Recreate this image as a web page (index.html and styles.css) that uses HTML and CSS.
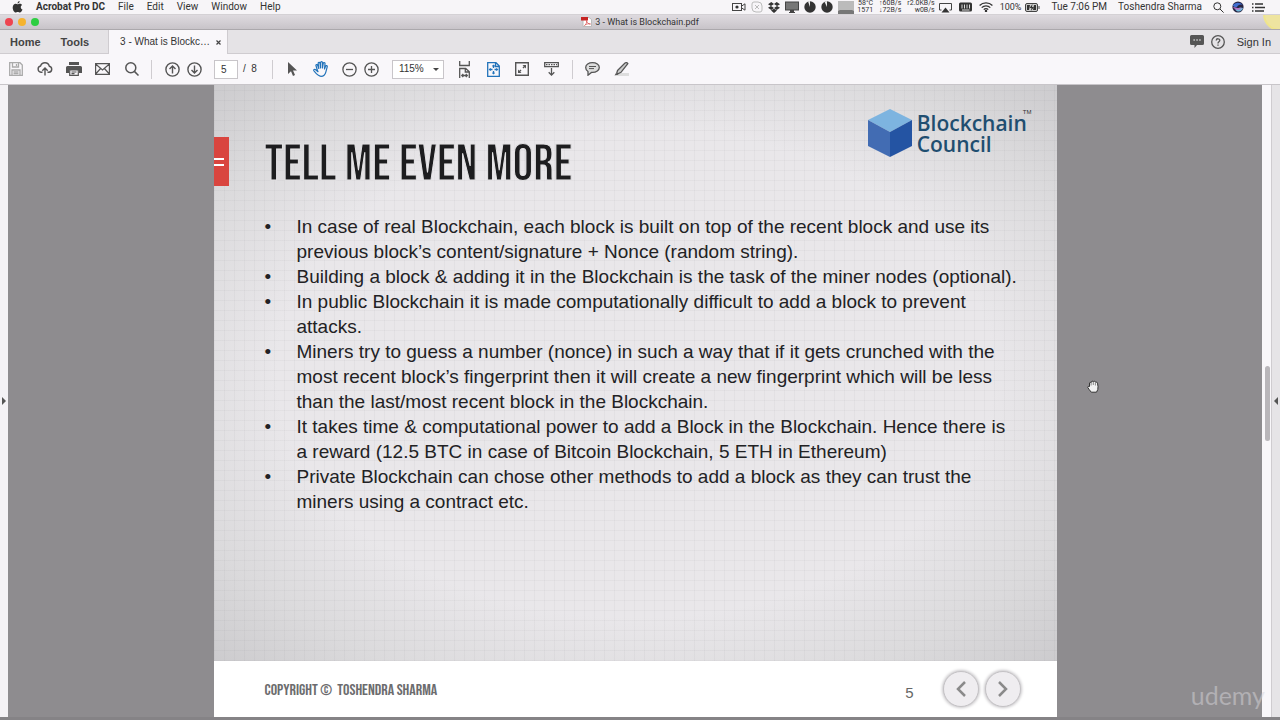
FILE: index.html
```html
<!DOCTYPE html>
<html lang="en">
<head>
<meta charset="utf-8">
<title>3 - What is Blockchain.pdf</title>
<link rel="stylesheet" href="styles.css">
</head>
<body>
<header class="menubar">
  <nav class="menus">
    <svg class="apple" width="11" height="12" viewBox="0 0 11 12"><path d="M7.6 0C7.7 1.4 6.7 2.5 5.5 2.6 5.4 1.4 6.4.2 7.6 0zM5.6 3.2c.6 0 1.2-.5 2.2-.5.9 0 1.8.5 2.3 1.2-2 1.2-1.6 3.8.4 4.6-.5 1.3-1.5 3.1-2.6 3.1-.8 0-1.200-.5-2.200-.5s-1.400.5-2.100.5C2.200 11.600.7 9 .7 6.600.7 4.200 2.200 2.800 3.700 2.800c.8 0 1.400.4 1.900.4z" fill="#333"/></svg>
    <a class="app" href="#">Acrobat Pro DC</a><a href="#">File</a><a href="#">Edit</a><a href="#">View</a><a href="#">Window</a><a href="#">Help</a>
  </nav>
  <div class="status">
    <div class="tray">
      <svg width="14" height="10" viewBox="0 0 14 10" fill="none" stroke="#444"><rect x=".5" y="1.500" width="9" height="7"/><circle cx="5" cy="5" r="1.600" fill="#333" stroke="none"/><path d="M9.500 4.200 13 1.800v6.400L9.500 5.800"/></svg>
      <svg width="12" height="12" viewBox="0 0 12 12" fill="none" stroke="#bbb"><path d="M3 1h4a4 4 0 0 1 4 4v4a2 2 0 0 1-2 2H5a4 4 0 0 1-4-4V3a2 2 0 0 1 2-2zM4 4l4 4M8 4 4 8"/></svg>
      <svg width="12" height="11" viewBox="0 0 12 11" fill="#333"><path d="M3.300 0 6 2 3 4 0 2.200zM8.700 0 12 2.200 9 4 6 2zM0 5.800 3 4l3 2-2.700 2zM12 5.800 9 4 6 6l2.700 2zM3 8.600 6 6.700l3 1.900L6 11z"/></svg>
      <svg width="14" height="12" viewBox="0 0 14 12"><rect x=".5" y="1" width="13" height="8" fill="#777" stroke="#444"/><path d="M5 9h4v2h1v1H4v-1h1z" fill="#444"/></svg>
      <svg width="12" height="12" viewBox="0 0 12 12"><circle cx="6" cy="6" r="5.700" fill="#333"/><path d="M6 6V0L4 .4z" fill="#eee"/></svg>
      <svg width="12" height="12" viewBox="0 0 12 12"><circle cx="6" cy="6" r="5.700" fill="#333"/><path d="M6 6V0L3.500.7z" fill="#eee"/></svg>
      <svg class="graph" width="16" height="13" viewBox="0 0 16 13"><path d="M0 0h16v13H0z" fill="#bbb"/><path d="M0 13v-3l2-1h12l2 1v3z" fill="#777"/></svg>
    </div>
    <div class="meters">
      <div class="meter">58°C<br>1571</div><div class="meter">↑60B/s<br>↓72B/s</div><div class="meter">r2.0KB/s<br>w0B/s</div>
    </div>
    <div class="tray wide">
      <svg width="13" height="11" viewBox="0 0 13 11"><path d="M2.500 8H.5V1.500h12V8h-2" fill="none" stroke="#444"/><path d="m6.500 5.500 4 5h-8z" fill="#333"/></svg>
      <svg width="13" height="10" viewBox="0 0 13 10"><rect y=".5" width="13" height="9" rx="1.500" fill="#333"/><path d="M3 2.500v4M5.500 2.500v4M8 2.500v4M10.500 2.500v4M3 8h7.500" stroke="#ddd"/></svg>
      <svg width="14" height="10" viewBox="0 0 14 10" fill="none" stroke="#333" stroke-width="1.300"><path d="M.6 3.500a9 9 0 0 1 12.800 0M2.700 5.600a6 6 0 0 1 8.600 0M4.800 7.600a3 3 0 0 1 4.400 0"/><circle cx="7" cy="9" r=".6"/></svg>
    </div>
    <div class="power"><span>100%</span><svg width="15" height="9" viewBox="0 0 15 9"><rect x=".5" y=".5" width="12" height="8" rx="1.500" fill="#ccc" stroke="#444"/><path d="M2 2h3L4 7H2zM11 2H9l-1 5h3z" fill="#333"/><path d="M7.500 1 4.500 5h2L5.800 8 9 4H7z" fill="#333"/><path d="M13.500 3h1v3h-1z" fill="#444"/></svg></div>
    <span>Tue 7:06 PM</span>
    <span>Toshendra Sharma</span>
    <div class="tray last">
      <svg width="11" height="11" viewBox="0 0 11 11" fill="none" stroke="#333"><circle cx="4.300" cy="4.300" r="3.500"/><path d="m7 7 3.600 3.600"/></svg>
      <svg width="12" height="12" viewBox="0 0 12 12"><circle cx="6" cy="6" r="5.600" fill="#272442"/><path d="M.8 4.500C3 1 8 1 11 4 8 3 6 4 5 6 4 7 2 6 .8 4.500z" fill="#406ed0"/><path d="M3 8c2 1 4-3 8-1-1 4-6 5-8 1z" fill="#71b9dd"/><path d="M1 6c3 0 4 2 9 1-3 3-7 2-9-1z" fill="#bc6fc4"/></svg>
      <svg width="13" height="9" viewBox="0 0 13 9"><path d="M3 1h8M3 4.500h10M3 8h9M0 1h1.500M0 4.500h1.500M0 8h1.500" stroke="#333" stroke-width="1.300"/></svg>
    </div>
  </div>
</header>
<div class="titlebar">
  <div class="lights"><i class="red"></i><i class="amber"></i><i class="green"></i></div>
  <div class="docname"><svg width="11" height="10" viewBox="0 0 11 10"><path d="M2 .5h6l2.500 2v7H2z" fill="#fff" stroke="#bbb"/><path d="M0 0h7v3.500H0z" fill="#c62323"/><path d="M3.500 8.500C5 7.500 6 5.500 5.500 3.500 6 6 7.500 7 9.500 7 7 6.500 5 7 3.500 8.500z" fill="none" stroke="#d64a4a" stroke-width=".7"/></svg><span>3 - What is Blockchain.pdf</span></div>
  <div class="spot"></div>
</div>
<div class="tabs">
  <button class="home">Home</button><button class="tools">Tools</button>
  <div class="tab"><span>3 - What is Blockc…</span><button class="close" aria-label="Close tab"><svg width="5" height="5" viewBox="0 0 5 5"><path d="m.5.500 4 4M4.500.5l-4 4" stroke="#444" stroke-width="1.200"/></svg></button></div>
  <div class="account">
    <svg width="14" height="13" viewBox="0 0 14 13"><path d="M1.500 0h11Q14 0 14 1.500v7q0 1.500-1.500 1.500H7l-2.500 3v-3h-3Q0 10 0 8.500v-7Q0 0 1.500 0z" fill="#555"/><path d="M3.500 5h1.300M6.400 5h1.300M9.300 5h1.300" stroke="#ddd" stroke-width="1.300"/></svg>
    <svg width="14" height="14" viewBox="0 0 14 14" fill="none" stroke="#555" stroke-width="1.300"><circle cx="7" cy="7" r="6.300"/><path d="M5.200 5.500c.1-2.400 3.700-2.200 3.600 0C8.700 6.800 7 6.800 7 8.400M7 9.500v1.300"/></svg>
    <a href="#">Sign In</a>
  </div>
</div>
<div class="toolbar">
  <div class="tools-row">
    <button aria-label="Save"><svg width="14" height="14" viewBox="0 0 14 14" fill="none" stroke="#aaa" stroke-width="1.300"><path d="M.7.7h10.300l2.300 2.300v10.300H.7zM3.500 1v4h6V1M7.500 2v2M3 13V8h8v5M4.500 9.800h5M4.500 11.500h5"/></svg></button>
    <button aria-label="Upload"><svg width="16" height="14" viewBox="0 0 16 14" fill="none" stroke="#555" stroke-width="1.400"><path d="M5.500 10.300H4a3.200 3.200 0 0 1-.4-6.300 4.500 4.500 0 0 1 8.700.2A3.100 3.100 0 0 1 12 10.300h-1.500M8 13.500V6M5.300 8.700 8 6l2.700 2.700"/></svg></button>
    <button aria-label="Print"><svg width="16" height="14" viewBox="0 0 16 14"><path d="M3 0h10v3H3zM1.500 4h13Q16 4 16 5.500V11h-3V8H3v3H0V5.500Q0 4 1.500 4z" fill="#555"/><path d="M3.700 8h8.600v5.300H3.700zM5.500 10h5M5.500 11.700h3" fill="none" stroke="#555" stroke-width="1.200"/></svg></button>
    <button aria-label="Mail"><svg width="15" height="12" viewBox="0 0 15 12" fill="none" stroke="#555" stroke-width="1.200"><path d="M.6.600h13.800v10.800H.6zM.6 1l6.900 6 6.900-6M.6 11l5-5.500M14.400 11l-5-5.500"/></svg></button>
    <button aria-label="Search"><svg width="14" height="14" viewBox="0 0 14 14" fill="none" stroke="#555" stroke-width="1.500"><circle cx="5.800" cy="5.800" r="5"/><path d="m9.400 9.400 4.100 4.100"/></svg></button>
  </div>
  <i class="sep"></i>
  <div class="tools-row tight">
    <button aria-label="Previous page"><svg width="15" height="15" viewBox="0 0 15 15" fill="none" stroke="#555" stroke-width="1.400"><circle cx="7.500" cy="7.500" r="6.600"/><path d="M7.500 11.500V4M4.500 7l3-3 3 3"/></svg></button>
    <button aria-label="Next page"><svg width="15" height="15" viewBox="0 0 15 15" fill="none" stroke="#555" stroke-width="1.400"><circle cx="7.500" cy="7.500" r="6.600"/><path d="M7.500 3.500V11M4.500 8l3 3 3-3"/></svg></button>
  </div>
  <label class="pager"><input type="text" value="5" aria-label="Page number"><span>/&nbsp; 8</span></label>
  <i class="sep"></i>
  <div class="tools-row">
    <button aria-label="Select"><svg width="10" height="14" viewBox="0 0 10 14"><path d="M1 0v12l3-2.800L6 14l2-.9-2-4.500h4z" fill="#555"/></svg></button>
    <button aria-label="Hand"><svg width="16" height="16" viewBox="0 0 16 16" fill="none" stroke="#2273ba" stroke-width="1.200" stroke-linecap="round" stroke-linejoin="round"><path d="M4.300 9 3 4.800c-.4-1.300 1.200-1.800 1.600-.6L5.800 7.500M5.800 7.500 5.200 2.500c-.2-1.400 1.600-1.600 1.800-.2L7.600 7M7.600 7V1.700c0-1.400 1.900-1.400 1.900 0V7M9.500 7l.7-4.500c.2-1.300 2-1.100 1.800.3L11.500 8M11.500 8l1-2.800c.5-1.200 2-.6 1.700.6l-1.300 5c-.8 3.200-2.100 4.500-4.900 4.500-3 0-4.200-1.800-7-5.300-.8-1.200.7-2.100 1.700-1.300L5 10.700 4.300 9"/></svg></button>
  </div>
  <div class="tools-row tight zoomers">
    <button aria-label="Zoom out"><svg width="15" height="15" viewBox="0 0 15 15" fill="none" stroke="#555" stroke-width="1.300"><circle cx="7.500" cy="7.500" r="6.600"/><path d="M4 7.500h7"/></svg></button>
    <button aria-label="Zoom in"><svg width="15" height="15" viewBox="0 0 15 15" fill="none" stroke="#555" stroke-width="1.300"><circle cx="7.500" cy="7.500" r="6.600"/><path d="M4 7.500h7M7.500 4v7"/></svg></button>
  </div>
  <div class="zoom"><select aria-label="Zoom level"><option>115%</option></select></div>
  <div class="tools-row">
    <button aria-label="Fit width"><svg width="13" height="17" viewBox="0 0 13 17" fill="none" stroke="#555" stroke-width="1.300"><path d="M1.700 0v4.500h9.600V0M1.700 17V7.500h6l3.600 3.200V17M7.300 7.500v3.500h4M4 14.500h5M5.300 13 3.800 14.500 5.300 16M7.800 13l1.500 1.500L7.800 16"/></svg></button>
    <button aria-label="Fit page"><svg width="13" height="15" viewBox="0 0 13 15" fill="none" stroke="#2273ba" stroke-width="1.300"><path d="M.7.700h8.300L12.300 4v10.300H.7zM8.500.7V4.500h3.800M6.500 3v3M6.500 9v3M2.500 7.500h3M7.500 7.500h3M5.400 4.400 6.500 3.300l1.100 1.100M5.400 10.600l1.100 1.100 1.100-1.100M3.700 6.400 2.600 7.500l1.100 1.100M9.300 6.400l1.100 1.100-1.100 1.100"/></svg></button>
    <button aria-label="Full screen"><svg width="14" height="14" viewBox="0 0 14 14" fill="none" stroke="#555" stroke-width="1.400"><path d="M.7.700h12.600v12.600H.7z"/><path d="m8 6 2.500-2.500M6 8l-2.500 2.500"/><path d="M7.500 3H11v3.500zM3 7.500V11h3.500z" fill="#555" stroke="none"/></svg></button>
    <button aria-label="Read mode"><svg width="15" height="14" viewBox="0 0 15 14" fill="none" stroke="#555" stroke-width="1.300"><path d="M.7.700h13.600v4H.7z"/><path d="M2 2.700h11" stroke-dasharray="1.500 1"/><path d="M7.500 6v7M4.700 10.300l2.800 2.800 2.800-2.800"/></svg></button>
  </div>
  <i class="sep short"></i>
  <div class="tools-row">
    <button aria-label="Comment"><svg width="15" height="14" viewBox="0 0 15 14"><path d="M7.500.7c3.800 0 6.800 2 6.800 4.800s-3 4.900-6.800 4.900h-1L3 13.200V9.500C1.500 8.600.7 7.200.7 5.500.7 2.700 3.700.7 7.500.7z" fill="#ddd" stroke="#555" stroke-width="1.300"/><path d="M4 4.500h7M4 6.600h5" stroke="#555"/></svg></button>
    <button aria-label="Highlight"><svg width="15" height="14" viewBox="0 0 15 14"><path d="M5 11h10v3H1z" fill="#ddd"/><path d="M3.500 8.500 11 1q2-1 2.800.6L7 10.300 3.500 12 2.800 11z" fill="#ccc" stroke="#555" stroke-width="1.300"/><path d="m2 11 2.500 1.500L.5 13.500z" fill="#555"/></svg></button>
  </div>
</div>
<main class="workspace">
  <button class="rail left" aria-label="Open navigation pane"></button>
  <div class="canvas">
    <article class="page">
      <section class="slide">
        <div class="head">
          <div class="marker"><i></i></div>
          <h1>TELL ME EVEN MORE</h1>
          <div class="logo">
            <svg width="44" height="48" viewBox="0 0 44 48"><path d="M22 0 44 11 22 23 0 11z" fill="#7db4e0"/><path d="m0 11 22 12v25L0 37z" fill="#426cb3"/><path d="M44 11 22 23v25l22-11z" fill="#2454a3"/></svg>
            <div class="brand">Blockchain<br>Council</div><sup>TM</sup>
          </div>
        </div>
        <ul class="points">
          <li>In case of real Blockchain, each block is built on top of the recent block and use its<br>previous block’s content/signature + Nonce (random string).</li>
          <li>Building a block &amp; adding it in the Blockchain is the task of the miner nodes (optional).</li>
          <li>In public Blockchain it is made computationally difficult to add a block to prevent<br>attacks.</li>
          <li>Miners try to guess a number (nonce) in such a way that if it gets crunched with the<br>most recent block’s fingerprint then it will create a new fingerprint which will be less<br>than the last/most recent block in the Blockchain.</li>
          <li>It takes time &amp; computational power to add a Block in the Blockchain. Hence there is<br>a reward (12.5 BTC in case of Bitcoin Blockchain, 5 ETH in Ethereum)</li>
          <li>Private Blockchain can chose other methods to add a block as they can trust the<br>miners using a contract etc.</li>
        </ul>
      </section>
      <footer class="foot">
        <span class="copy">COPYRIGHT ©&nbsp; TOSHENDRA SHARMA</span>
        <span class="num">5</span>
        <button class="round" aria-label="Previous slide"><svg width="10" height="16" viewBox="0 0 10 16"><path d="M9 1 2 8l7 7" fill="none" stroke="#8a8a8a" stroke-width="2.500"/></svg></button>
        <button class="round" aria-label="Next slide"><svg width="10" height="16" viewBox="0 0 10 16"><path d="m1 1 7 7-7 7" fill="none" stroke="#8a8a8a" stroke-width="2.500"/></svg></button>
      </footer>
    </article>
    <svg class="hand" width="12" height="13" viewBox="0 0 12 13"><path d="M2.500 6.500V3q.8-1.500 1.600-.3Q5-.1 6.300 1.500 7.800.3 8.400 2.200q1.700-.7 2.100 1L11 6.500q.4 3-1.500 5.700H4.300Q2 9.500.8 7.500q0-1.800 1.700-1z" fill="#f2f2f2" stroke="#333"/><path d="M4.100 3v2.500M6.300 2v3M8.400 2.500v3" stroke="#888"/></svg>
  </div>
  <div class="scroll"><i></i></div>
  <button class="rail right" aria-label="Open tools pane"></button>
  <div class="watermark">udemy</div>
</main>
</body>
</html>
```
FILE: styles.css
```css
* { box-sizing: border-box; }
body {
  margin: 0;
  min-height: 100vh;
  display: flex;
  flex-direction: column;
  background: #858386;
  padding-bottom: 3px;
  font: 10px/14px Roboto, "Liberation Sans", sans-serif;
  color: #333;
}
a { color: inherit; text-decoration: none; }
button { border: 0; padding: 0; background: none; color: inherit; font: inherit; display: flex; align-items: center; justify-content: center; }
svg { display: block; flex: none; }

.menubar { height: 15px; background: #f7f5f8; display: flex; justify-content: space-between; align-items: center; padding: 0 15px 0 12px; white-space: nowrap; border-bottom: 1px solid #d4d1d5; }
.menus { display: flex; align-items: center; gap: 13px; }
.menus .app { font-weight: 700; }
.status { display: flex; align-items: center; gap: 11px; }
.tray { display: flex; align-items: center; gap: 5px; }
.tray.wide { gap: 7px; margin-left: -7px; margin-right: -4px; }
.tray.last { gap: 8px; }
.meters { display: flex; gap: 6px; margin-left: -8px; font: 7px/7px Roboto, sans-serif; }
.meter { text-align: right; }
.power { display: flex; align-items: center; gap: 4px; font-size: 9px; }

.titlebar { height: 15px; background: linear-gradient(#dedadf, #c8c4c9); border-bottom: 1px solid #aba8ac; display: flex; align-items: center; justify-content: center; position: relative; overflow: hidden; }
.lights { position: absolute; left: 5px; top: 3px; display: flex; gap: 5px; }
.lights i { width: 8px; height: 8px; border-radius: 50%; }
.red { background: #ee4450; }
.amber { background: #f5b32e; }
.green { background: #2dce42; }
.docname { display: flex; align-items: center; gap: 3px; font: 9px/14px Roboto, "Liberation Sans", sans-serif; }
.spot { position: absolute; right: -17px; top: -18px; width: 34px; height: 34px; border-radius: 50%; background: #eee4a0; border: 2px solid #efe58c; }

.tabs { height: 24px; display: flex; align-items: stretch; background: #e5e3e6; border-bottom: 1px solid #cfccd0; font: 11px/14px "Liberation Sans", sans-serif; }
.home, .tools { font-weight: 700; color: #444; }
.home { padding: 0 17px 0 10px; }
.tools { padding: 0 19px 0 3px; }
.tab { width: 120px; margin-bottom: -1px; background: #f9f7fa; border: solid #cfccd0; border-width: 0 1px; display: flex; align-items: center; justify-content: flex-end; gap: 6px; padding-right: 6px; font-size: 10px; }
.account { margin-left: auto; display: flex; align-items: center; gap: 7px; padding-right: 9px; }
.account a { padding-left: 5px; }

.toolbar { height: 31px; background: #f9f7fa; border-bottom: 1px solid #c8c5c9; display: flex; align-items: center; padding-left: 1px; }
.tools-row { display: flex; }
.tools-row button { width: 29px; height: 28px; }
.tools-row.tight button { width: 22px; }
.sep { width: 1px; height: 19px; background: #cfccd0; margin: 0 9px 0 5px; }
.sep + .tools-row.tight { margin-right: 9px; }
.pager { display: flex; align-items: center; gap: 5px; font: 10px/14px "Liberation Sans", sans-serif; }
.pager input { width: 24px; height: 19px; border: 1px solid #c8c5c9; background: #fff; font: inherit; color: #333; text-align: left; padding: 0 0 0 6px; }
.pager + .sep { margin: 0 5px 0 15px; }
.zoomers { margin-left: 3px; margin-right: 9px; }
.zoom { position: relative; margin-right: 6px; }
.zoom select { appearance: none; display: block; width: 52px; height: 19px; border: 1px solid #c8c5c9; border-radius: 0; background: #fff; font: 10px/14px "Liberation Sans", sans-serif; color: #333; padding: 0 0 0 6px; }
.zoom::after { content: ""; position: absolute; right: 5px; top: 8px; border: 3px solid transparent; border-top: 3px solid #444; border-bottom: 0; pointer-events: none; }
.sep.short { margin: 0 5px 0 6px; }

.workspace { flex: 1; display: flex; position: relative; }
.rail { width: 8px; background: #e6e4e7; }
.rail.left { background: #f4f2f5; }
.rail::before { content: ""; border: 4px solid transparent; }
.rail.left::before { border-left: 4px solid #555; border-right: 0; }
.rail.right::before { border-right: 4px solid #555; border-left: 0; }
.canvas { flex: 1; min-width: 0; background: #8e8c8f; display: flex; justify-content: center; position: relative; }
.page { width: 100%; max-width: 843px; display: flex; flex-direction: column; }
.slide {
  flex: 1;
  padding: 24px 0 20px;
  background:
    repeating-linear-gradient(0deg, rgba(120, 120, 125, .06) 0 1px, transparent 1px 10px),
    repeating-linear-gradient(90deg, rgba(120, 120, 125, .06) 0 1px, transparent 1px 10px),
    radial-gradient(ellipse at 50% 50%, #e9e7ea 60%, #dbdadc 82%, #c4c3c6 110%);
}
.head { display: flex; align-items: flex-start; }
.marker { width: 15px; height: 49px; margin-top: 28px; background: #d9453f; display: flex; align-items: center; }
.marker i { width: 10px; height: 8px; border: solid #fff; border-width: 2px 0; }
h1 { margin: 26px 0 0 36px; font: 400 51px/60px "Bebas Neue", "Open Sans Condensed", "Liberation Sans Narrow", sans-serif; color: #1d1d1f; -webkit-text-stroke: 1px #e4e3e5; white-space: nowrap; }
.logo { margin-left: auto; padding-right: 25px; display: flex; align-items: flex-start; }
.brand { margin: 4px 0 0 5px; font: 600 21px/21px "Open Sans", sans-serif; color: #1f4e70; }
sup { font: 6px/6px "Liberation Sans", sans-serif; margin-left: -4px; }
.points { list-style: none; margin: 19px 0 0; padding: 0 0 0 83px; font: 19px/25px "Liberation Sans", Arial, sans-serif; color: #222224; white-space: nowrap; }
.points li { display: flex; }
.points li::before { content: "•"; width: 32px; margin-left: -32px; flex: none; }
.foot { background: #fff; height: 56px; display: flex; align-items: center; padding: 0 36px 0 51px; gap: 6px; }
.copy { padding-top: 4px; font: 16px/20px "Bebas Neue", "Open Sans Condensed", "Liberation Sans Narrow", sans-serif; color: #6c6c6e; }
.num { margin-left: auto; margin-right: 23px; padding-top: 8px; font: 15px/18px "Liberation Sans", sans-serif; color: #666; }
.round { width: 36px; height: 36px; border-radius: 50%; background: #efedf0; border: 1px solid #c4c2c5; box-shadow: 0 0 3px 1px #c8c6c9; }
.hand { position: absolute; left: 1079px; top: 295px; }
.scroll { width: 10px; background: #f9f7fa; border-right: 1px solid #cfccd0; display: flex; flex-direction: column; padding-left: 3px; }
.scroll::before { content: ""; flex: 281; }
.scroll::after { content: ""; flex: 276; }
.scroll i { flex: 76; width: 5px; border-radius: 3px; background: #b9b6ba; }
.watermark { position: absolute; right: 15px; bottom: 6px; font: 400 25px/32px Lato, sans-serif; color: rgba(215, 213, 217, .5); }
```
